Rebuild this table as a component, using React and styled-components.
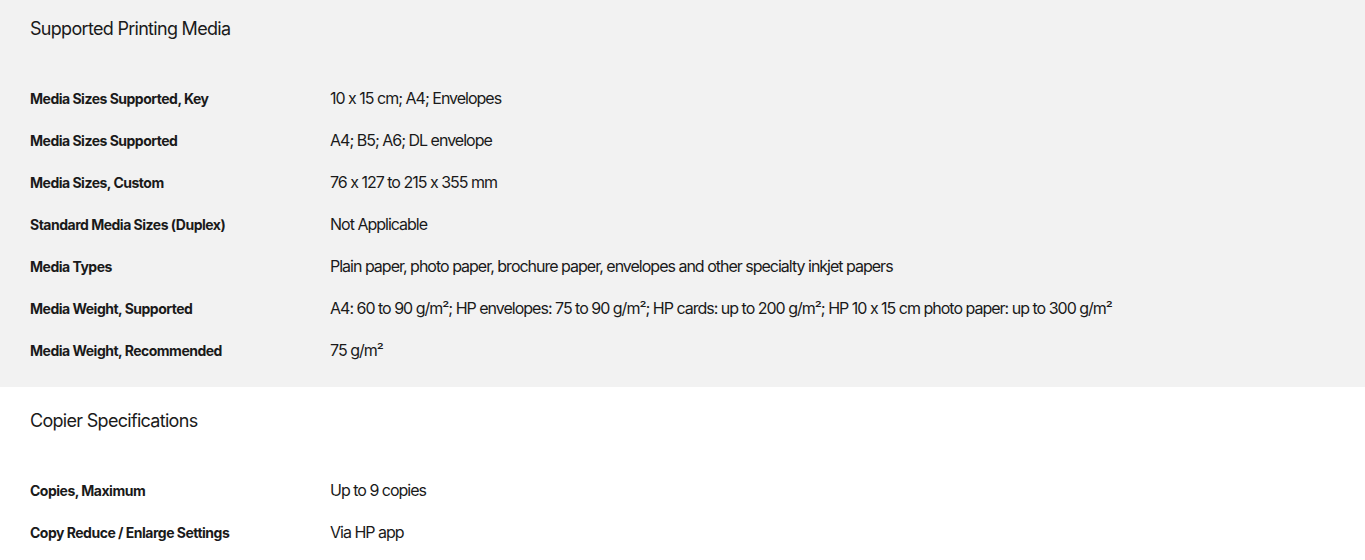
import React from 'react';
import styled, { createGlobalStyle } from 'styled-components';

const GlobalStyle = createGlobalStyle`
  body {
    margin: 0;
    background: #ffffff;
    font-family: Inter, "Noto Sans", sans-serif;
    color: #1a1a1a;
  }
`;

const Section = styled.section`
  background: ${props => (props.$shaded ? '#f2f2f2' : '#ffffff')};
  padding: ${props => props.$top}px 30px 16px;
`;

const Title = styled.h2`
  margin: 0 0 35px;
  font-size: 18px;
  font-weight: 400;
  line-height: 26px;
  letter-spacing: -0.7px;
`;

const Row = styled.div`
  display: grid;
  grid-template-columns: 300px 1fr;
  align-items: center;
  height: 42px;
`;

const Label = styled.div`
  font-size: 14px;
  font-weight: 700;
  letter-spacing: -0.5px;
`;

const Value = styled.div`
  font-size: 16px;
  font-weight: 400;
  letter-spacing: -1px;
`;

const sections = [
  {
    title: 'Supported Printing Media',
    shaded: true,
    top: 16,
    rows: [
      ['Media Sizes Supported, Key', '10 x 15 cm; A4; Envelopes'],
      ['Media Sizes Supported', 'A4; B5; A6; DL envelope'],
      ['Media Sizes, Custom', '76 x 127 to 215 x 355 mm'],
      ['Standard Media Sizes (Duplex)', 'Not Applicable'],
      ['Media Types', 'Plain paper, photo paper, brochure paper, envelopes and other specialty inkjet papers'],
      ['Media Weight, Supported', 'A4: 60 to 90 g/m²; HP envelopes: 75 to 90 g/m²; HP cards: up to 200 g/m²; HP 10 x 15 cm photo paper: up to 300 g/m²'],
      ['Media Weight, Recommended', '75 g/m²'],
    ],
  },
  {
    title: 'Copier Specifications',
    shaded: false,
    top: 21,
    rows: [
      ['Copies, Maximum', 'Up to 9 copies'],
      ['Copy Reduce / Enlarge Settings', 'Via HP app'],
    ],
  },
];

export default function App() {
  return (
    <>
      <GlobalStyle />
      {sections.map(section => (
        <Section key={section.title} $shaded={section.shaded} $top={section.top}>
          <Title>{section.title}</Title>
          {section.rows.map(([label, value]) => (
            <Row key={label}>
              <Label>{label}</Label>
              <Value>{value}</Value>
            </Row>
          ))}
        </Section>
      ))}
    </>
  );
}
